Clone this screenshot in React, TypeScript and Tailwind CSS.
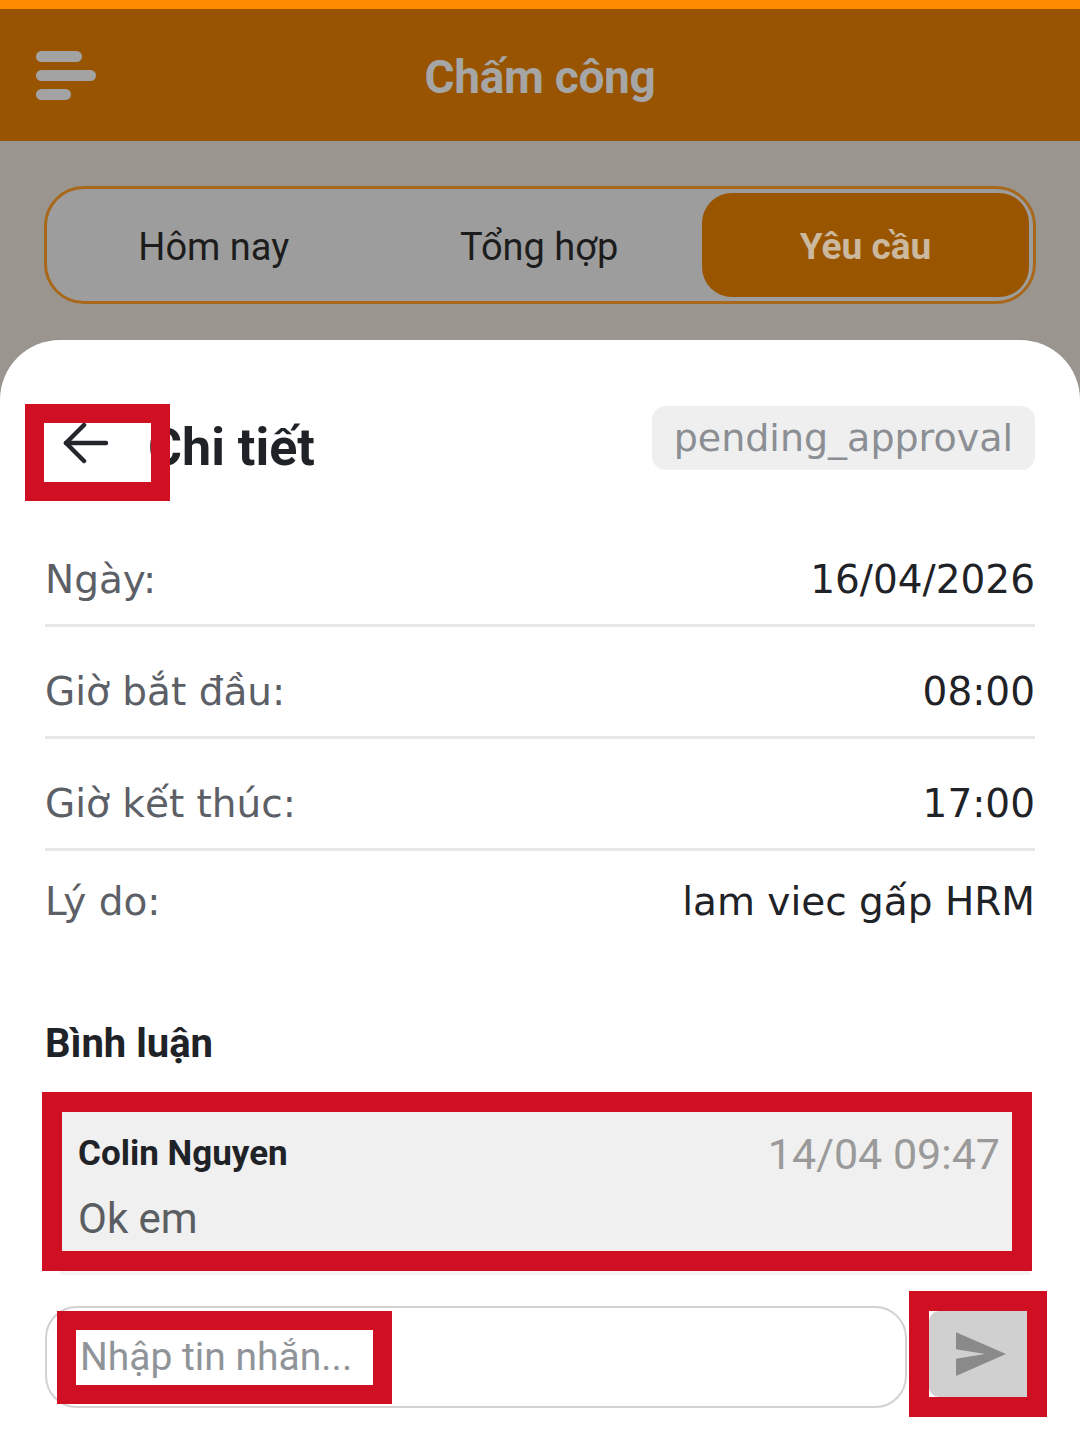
import React from "react";

function MenuIcon() {
  return (
    <div className="flex flex-col gap-[8px]">
      <div className="w-[46px] h-[11px] rounded-full bg-[#a3a3a3]" />
      <div className="w-[60px] h-[11px] rounded-full bg-[#a3a3a3]" />
      <div className="w-[35px] h-[11px] rounded-full bg-[#a3a3a3]" />
    </div>
  );
}

function Row({ label, value, last }: { label: string; value: string; last?: boolean }) {
  return (
    <div
      className={
        "flex items-center justify-between pb-[21px] " +
        (last ? "pt-[28px]" : "pt-[42px] border-b-[3px] border-[#e8e8e8]")
      }
    >
      <span className="text-[39px] leading-[46px] text-[#5c6066]">{label}</span>
      <span className="text-[39px] leading-[46px] text-[#1f2226]">{value}</span>
    </div>
  );
}

export default function App() {
  return (
    <div className="w-[1080px] h-[1449px] bg-[#9a968f] overflow-hidden font-['Roboto',sans-serif]">
      <div className="h-[9px] bg-[#ff8c00]" />
      <div className="h-[132px] bg-[#985400] grid grid-cols-[1fr_auto_1fr] items-center px-[36px]">
        <MenuIcon />
        <div className="text-[46px] font-bold text-[#a6a6a6] tracking-[-0.3px] pt-[4px]">Chấm công</div>
        <div />
      </div>

      <div className="px-[44px] pt-[45px]">
        <div className="h-[118px] rounded-[40px] border-[3px] border-[#a8681c] bg-[#9d9d9d] flex items-center pl-[4px] pr-[4px]">
          <div className="flex-1 flex justify-center text-[38px] text-[#1c1c1c] pt-[4px]">Hôm nay</div>
          <div className="flex-1 flex justify-center text-[38px] text-[#1c1c1c] pt-[4px]">Tổng hợp</div>
          <div className="w-[327px] h-[104px] rounded-[30px] bg-[#9a5500] flex items-center justify-center text-[37px] font-bold text-[#cbb99f] pt-[4px]">
            Yêu cầu
          </div>
        </div>
      </div>

      <div className="mt-[36px] bg-white rounded-t-[60px] h-[1200px] pt-[66px] font-['DejaVu_Sans',sans-serif]">
        <div className="px-[45px]">
          <div className="relative flex items-center justify-between h-[64px]">
            <div className="flex items-center">
              <div className="w-[105px] pl-[17px] flex items-center pt-[10px]">
                <svg width="46" height="42" viewBox="0 0 46 42" fill="none" stroke="#23272c" strokeWidth="4.5" strokeLinecap="round" strokeLinejoin="round">
                  <path d="M44 21H4" />
                  <path d="M22 3 4 21l18 18" />
                </svg>
              </div>
              <span className="font-['Roboto',sans-serif] font-bold text-[52px] text-[#1f2328] pt-[20px] -ml-[2px]">Chi tiết</span>
            </div>
            <div className="h-[64px] px-[22px] rounded-[14px] bg-[#efefef] flex items-center text-[38px] text-[#8b8e92]">
              pending_approval
            </div>
            <div className="absolute -left-[20px] -top-[2px] w-[145px] h-[97px] border-[19px] border-[#d10f23]" />
          </div>

          <div className="mt-[45px]">
            <Row label="Ngày:" value="16/04/2026" />
            <Row label="Giờ bắt đầu:" value="08:00" />
            <Row label="Giờ kết thúc:" value="17:00" />
            <Row label="Lý do:" value="lam viec gấp HRM" last />
          </div>

          <div className="mt-[76px] font-['Roboto',sans-serif] font-bold text-[40px] leading-[44px] text-[#1f2328]">
            Bình luận
          </div>
        </div>

        <div className="ml-[42px] w-[990px] mt-[26px] border-[20px] border-[#d10f23] font-['Roboto',sans-serif]">
          <div className="bg-[#f0f0f0] h-[139px] pl-[16px] pr-[12px] pt-[19px]">
            <div className="flex items-center justify-between h-[46px]">
              <span className="text-[35px] font-bold text-[#1f2328]">Colin Nguyen</span>
              <span className="text-[43px] text-[#9a9a9a]">14/04 09:47</span>
            </div>
            <div className="mt-[18px] text-[42px] leading-[48px] text-[#5a5d62]">Ok em</div>
          </div>
        </div>
        <div className="ml-[60px] w-[970px] h-[4px] bg-[#f4f4f4]" />

        <div className="ml-[45px] w-[1002px] mt-[16px] flex items-start font-['Roboto',sans-serif]">
          <div className="flex-1 mt-[15px] h-[102px] rounded-[32px] border-2 border-[#d2d2d2] flex items-center pl-[10px]">
            <div className="w-[335px] h-[93px] border-[19px] border-[#d10f23] flex items-center pl-[4px]">
              <span className="text-[39px] text-[#909499]">Nhập tin nhắn...</span>
            </div>
          </div>
          <div className="ml-[2px] w-[138px] h-[126px] border-[20px] border-[#d10f23]">
            <div className="w-full h-full bg-[#d0d0d0] rounded-l-[10px] flex items-center justify-center pl-[6px]">
              <svg width="50" height="44" viewBox="0 0 24 21" fill="#8a8a8a">
                <path d="M0 21 24 10.5 0 0v8.2l14 2.3-14 2.3z" />
              </svg>
            </div>
          </div>
        </div>
      </div>
    </div>
  );
}
